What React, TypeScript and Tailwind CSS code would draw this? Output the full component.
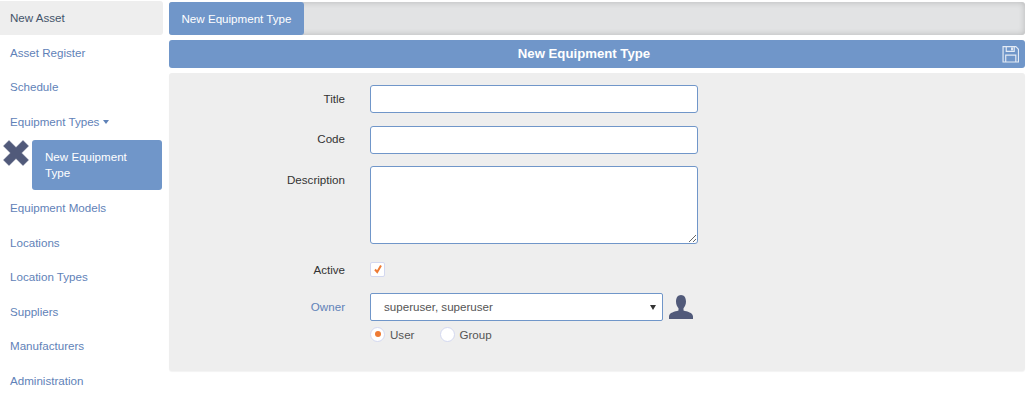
const sideLinks = ["Asset Register", "Schedule"]
const lowerLinks = ["Equipment Models", "Locations", "Location Types", "Suppliers", "Manufacturers", "Administration"]

const FieldLabel = ({ text, blue = false }: { text: string; blue?: boolean }) => (
  <label className={`block w-[176px] shrink-0 text-right text-[11.6px] leading-[17px] ${blue ? "text-[#5f82b8]" : "text-[#333]"}`}>
    {text}
  </label>
)

const App = () => {
  return (
    <div className="flex h-[400px] w-[1026px] overflow-hidden bg-white font-['Liberation_Sans',Arial,sans-serif] text-[11.6px]">
      {/* side menu */}
      <aside className="flex w-[163px] shrink-0 flex-col pt-[1px]">
        <div className="flex h-[34px] items-center rounded-r-[3px] bg-[#eeeeee] pl-[10px] text-[#44546a]">New Asset</div>
        {sideLinks.map((l) => (
          <a key={l} className="mt-[0.6px] flex h-[34px] items-center pl-[10px] text-[#5f82b8]">{l}</a>
        ))}
        <a className="mt-[0.6px] flex h-[34px] items-center pl-[10px] text-[#5f82b8]">
          Equipment Types
          <span className="ml-[4px] mt-[1px] h-0 w-0 border-x-[3.5px] border-t-[4px] border-x-transparent border-t-[#5f82b8]" />
        </a>
        <div className="mt-[1px] flex h-[50px] items-start">
          <svg viewBox="0 0 26 26" className="ml-[3px] h-[26px] w-[26px] shrink-0">
            <path d="M6 0.5 L13 7.5 L20 0.5 L25.5 6 L18.5 13 L25.5 20 L20 25.5 L13 18.5 L6 25.5 L0.5 20 L7.5 13 L0.5 6 Z" fill="#515a7a" stroke="#515a7a" strokeWidth="0.5" strokeLinejoin="round" />
          </svg>
          <div className="ml-[3px] h-[50px] w-[130px] rounded-[3px] bg-[#7096c9] pb-[8px] pl-[13px] pr-[10px] pt-[9px] leading-[16.5px] text-white">
            New Equipment Type
          </div>
        </div>
        <div className="mt-[1px] flex flex-col">
          {lowerLinks.map((l) => (
            <a key={l} className="mb-[0.6px] flex h-[34px] items-center pl-[10px] text-[#5f82b8]">{l}</a>
          ))}
        </div>
      </aside>

      {/* main column */}
      <main className="ml-[6px] flex w-[856px] flex-col pt-[2px]">
        <div className="flex h-[33px] rounded-[3px] bg-[#e2e3e4] shadow-[inset_0_0_6px_rgba(0,0,0,0.2)]">
          <div className="flex h-full items-center rounded-[3px] bg-[#7096c9] px-[12.5px] text-white">New Equipment Type</div>
        </div>
        <div className="relative mt-[5px] flex h-[27.5px] items-center justify-center rounded-[3px] bg-[#7096c9] text-[13.2px] font-bold text-white">
          <span className="-ml-[26px]">New Equipment Type</span>
          <svg viewBox="0 0 16 16" className="absolute right-[6px] top-[5px] h-[18px] w-[17px]" fill="none" stroke="#e4ebf5" strokeWidth="1.1">
            <path d="M1 1 H13 L15.5 3.5 V15.5 H1 Z" />
            <path d="M4 1 V5.5 H11.5 V1" />
            <rect x="8.5" y="1.8" width="1.8" height="2.8" fill="#e4ebf5" stroke="none" />
            <path d="M3.5 15.5 V9 H13 V15.5" />
          </svg>
        </div>
        <section className="mt-[5px] flex h-[298.5px] flex-col rounded-[3px] bg-[#eeeeee] shadow-[0_1px_1px_rgba(0,0,0,0.05)]">
          <div className="mt-[12px] flex items-center">
            <FieldLabel text="Title" />
            <input className="ml-[25px] h-[28px] w-[328px] rounded-[3px] border border-[#7096c9] bg-white" />
          </div>
          <div className="mt-[13px] flex items-center">
            <div className="shrink-0 pb-[2px]"><FieldLabel text="Code" /></div>
            <input className="ml-[25px] h-[28px] w-[328px] rounded-[3px] border border-[#7096c9] bg-white" />
          </div>
          <div className="mt-[12px] flex items-start">
            <div className="mt-[5px] shrink-0"><FieldLabel text="Description" /></div>
            <textarea className="ml-[25px] h-[78px] w-[328px] rounded-[3px] border border-[#7096c9] bg-white" />
          </div>
          <div className="mt-[17px] flex items-center">
            <FieldLabel text="Active" />
            <span className="ml-[25px] flex h-[15px] w-[15px] items-center justify-center rounded-[2px] border border-[#d3d8f0] bg-white">
              <svg viewBox="0 0 10 10" className="h-[10px] w-[10px]">
                <path d="M2 5.5 L4.2 8 L8 1.5" fill="none" stroke="#ee7b35" strokeWidth="2" />
              </svg>
            </span>
          </div>
          <div className="mt-[15px] flex items-center">
            <FieldLabel text="Owner" blue />
            <div className="relative ml-[25px] flex h-[28px] w-[293px] items-center rounded-[2px] border border-[#7096c9] bg-white pl-[13px] text-[#555]">
              superuser, superuser
              <span className="absolute right-[6px] top-[11px] h-0 w-0 border-x-[3px] border-t-[5px] border-x-transparent border-t-[#333]" />
            </div>
            <svg viewBox="0 0 26 26" className="ml-[5px] h-[26px] w-[26px]" fill="#515a7a">
              <path d="M13 1 C9.8 1 8 3.8 8 7.5 C8 10.5 9.3 13 10.5 14.2 V16.5 C7 17.5 1 18.5 1 22.5 V25 H25 V22.5 C25 18.5 19 17.5 15.5 16.5 V14.2 C16.7 13 18 10.5 18 7.5 C18 3.8 16.2 1 13 1 Z" />
            </svg>
          </div>
          <div className="ml-[201px] mt-[5px] flex items-center text-[#555]">
            <span className="flex h-[15px] w-[15px] items-center justify-center rounded-full border border-[#d3d8f0] bg-white">
              <span className="h-[6px] w-[6px] rounded-full bg-[#ee7b35]" />
            </span>
            <span className="ml-[5px]">User</span>
            <span className="ml-[26px] h-[15px] w-[15px] rounded-full border border-[#d3d8f0] bg-white" />
            <span className="ml-[4px]">Group</span>
          </div>
        </section>
      </main>
    </div>
  )
}

export default App
